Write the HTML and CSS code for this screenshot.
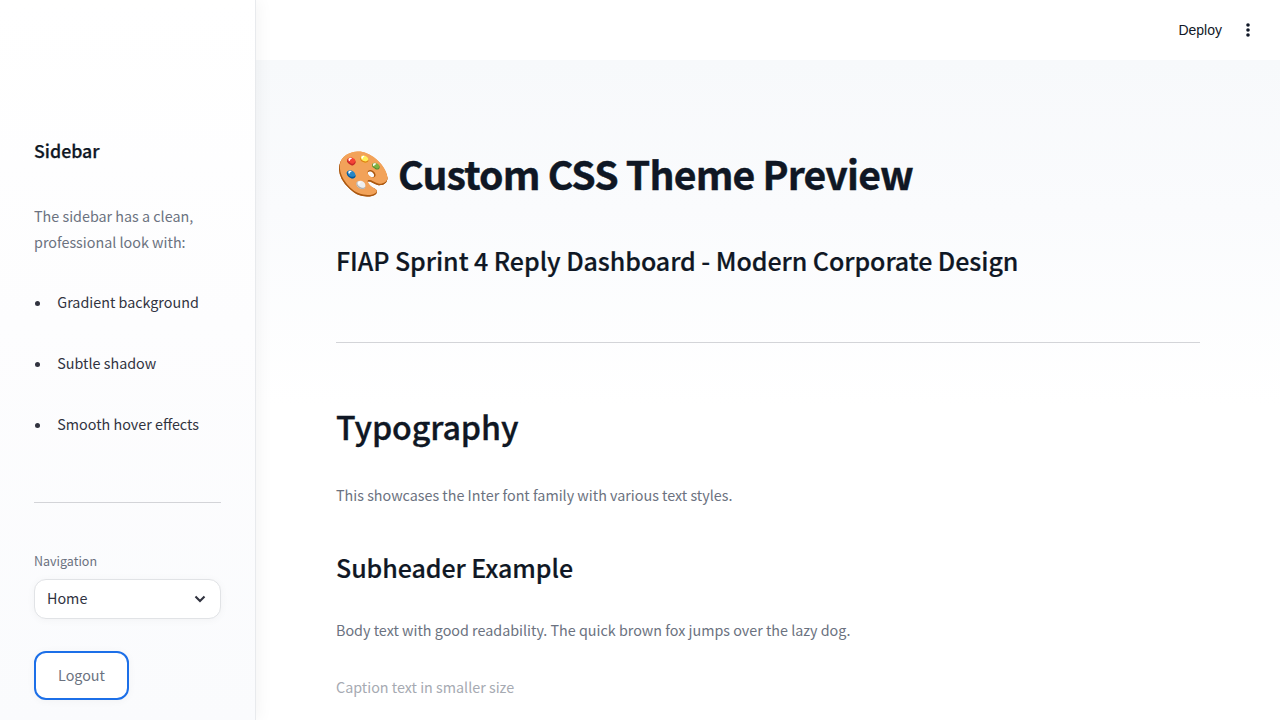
FILE: index.html
```html
<!DOCTYPE html>
<html lang="en">
<head>
<meta charset="utf-8">
<title>Custom CSS Theme Preview</title>
<link rel="stylesheet" href="styles.css">
</head>
<body>
<div class="app">
  <aside class="sidebar">
    <h3 class="sidebar-title"><span class="tx">Sidebar</span></h3>
    <p class="sidebar-text"><span class="tx">The sidebar has a clean,</span><br><span class="tx">professional look with:</span></p>
    <ul class="features">
      <li><span class="tx">Gradient background</span></li>
      <li><span class="tx">Subtle shadow</span></li>
      <li><span class="tx">Smooth hover effects</span></li>
    </ul>
    <hr class="rule">
    <label class="nav-label"><span class="tx">Navigation</span></label>
    <div class="select">
      <span class="tx">Home</span>
      <svg class="chevron" viewBox="0 0 12 12" width="12" height="12"><path d="M1.5 3.6 6 8.1l4.5-4.5" fill="none" stroke="#31333f" stroke-width="2.1"/></svg>
    </div>
    <button class="logout"><span class="tx">Logout</span></button>
  </aside>
  <div class="page">
    <header class="toolbar">
      <span class="deploy">Deploy</span>
      <svg class="menu" viewBox="0 0 4 14" width="4" height="14" fill="#111827"><circle cx="2" cy="2" r="1.8"/><circle cx="2" cy="7" r="1.8"/><circle cx="2" cy="12" r="1.8"/></svg>
    </header>
    <main class="content">
      <h1 class="title"><span class="palette">🎨</span><span class="tx">Custom CSS Theme Preview</span></h1>
      <h3 class="subhead"><span class="tx">FIAP Sprint 4 Reply Dashboard - Modern Corporate Design</span></h3>
      <hr class="rule">
      <h2 class="section"><span class="tx">Typography</span></h2>
      <p class="body-text intro"><span class="tx">This showcases the Inter font family with various text styles.</span></p>
      <h3 class="subhead example"><span class="tx">Subheader Example</span></h3>
      <p class="body-text sample"><span class="tx">Body text with good readability. The quick brown fox jumps over the lazy dog.</span></p>
      <p class="caption"><span class="tx">Caption text in smaller size</span></p>
    </main>
  </div>
</div>
</body>
</html>
```
FILE: styles.css
```css
* { box-sizing: border-box; margin: 0; padding: 0; }
body {
  font-family: "Source Sans Pro", "Noto Sans CJK SC", sans-serif;
  font-size: 14.33px;
  line-height: 26px;
  color: #31333f;
  background: #fff;
}
.app { display: flex; height: 720px; overflow: hidden; }
.sidebar {
  position: relative;
  z-index: 1;
  width: 256px;
  flex: none;
  padding: 138px 34px 0 34px;
  background: linear-gradient(180deg, #fff 0%, #fdfdfe 45%, #fafbfd 100%);
  border-right: 1px solid #e8eaed;
  box-shadow: 2px 0 16px rgba(0, 0, 0, .05);
}
.sidebar-title { font-size: 17.8px; line-height: 24px; font-weight: 500; color: #0f1724; -webkit-text-stroke: .25px #0f1724; }
.sidebar-text { margin-top: 41px; color: #6b7280; white-space: nowrap; }
.features { margin-top: 34px; list-style: none; display: flex; flex-direction: column; gap: 35px; }
.features li { display: flex; align-items: center; white-space: nowrap; }
.features li::before { content: ""; width: 5px; height: 5px; margin: 3px 17.3px 0 1px; border-radius: 50%; background: #31333f; }
.rule { border: 0; height: 1px; background: #d3d4d8; }
.sidebar .rule { margin-top: 65px; }
.nav-label { display: block; margin-top: 48px; font-size: 12.5px; line-height: 20px; color: #6b7280; }
.select {
  display: flex; align-items: center; justify-content: space-between;
  height: 40px; margin-top: 8px; padding: 0 14px 2px 12px;
  background: #fff; border: 1px solid #e1e3e6; border-radius: 12px;
  box-shadow: 0 1px 8px rgba(0, 0, 0, .04);
}
.chevron { margin-top: 2px; }
.logout {
  display: block; width: 95px; height: 49px; margin-top: 32px; padding-bottom: 2px;
  font: inherit; color: #6b7280; background: #fff;
  border: 2px solid #1c6fe8; border-radius: 12px;
  box-shadow: 0 1px 8px rgba(0, 0, 0, .04);
}
.page { flex: 1; min-width: 0; display: flex; flex-direction: column; }
.toolbar {
  height: 60px; flex: none; padding-right: 30px;
  display: flex; align-items: center; justify-content: flex-end; gap: 24px;
  background: #fff;
}
.deploy { font: 14px/20px "Liberation Sans", Arial, sans-serif; color: #111827; }
.content {
  flex: 1; padding: 84px 80px 0;
  background: linear-gradient(180deg, #f7f9fb 0, #fafbfd 150px, #fff 345px);
  white-space: nowrap;
}
.title { display: flex; height: 56px; font-size: 39.2px; line-height: 58px; font-weight: 700; letter-spacing: -.85px; color: #0f1724; -webkit-text-stroke: .4px #0f1724; }
.palette { width: 62px; padding-top: 2px; line-height: 56px; font-family: "Noto Color Emoji"; font-size: 44px; font-weight: 400; letter-spacing: 0; }
.subhead { margin-top: 43px; font-size: 25px; line-height: 34px; font-weight: 500; letter-spacing: -.06px; color: #0f1724; -webkit-text-stroke: .2px #0f1724; }
.content .rule { margin-top: 65px; }
.section { margin-top: 61px; font-size: 32.2px; line-height: 44px; font-weight: 500; letter-spacing: -.1px; color: #0f1724; -webkit-text-stroke: .35px #0f1724; }
.body-text { color: #6b7280; }
.intro { margin-top: 34px; }
.example { margin-top: 42px; }
.sample { margin-top: 33px; }
.caption { margin-top: 31px; color: #a6aab2; }
```
